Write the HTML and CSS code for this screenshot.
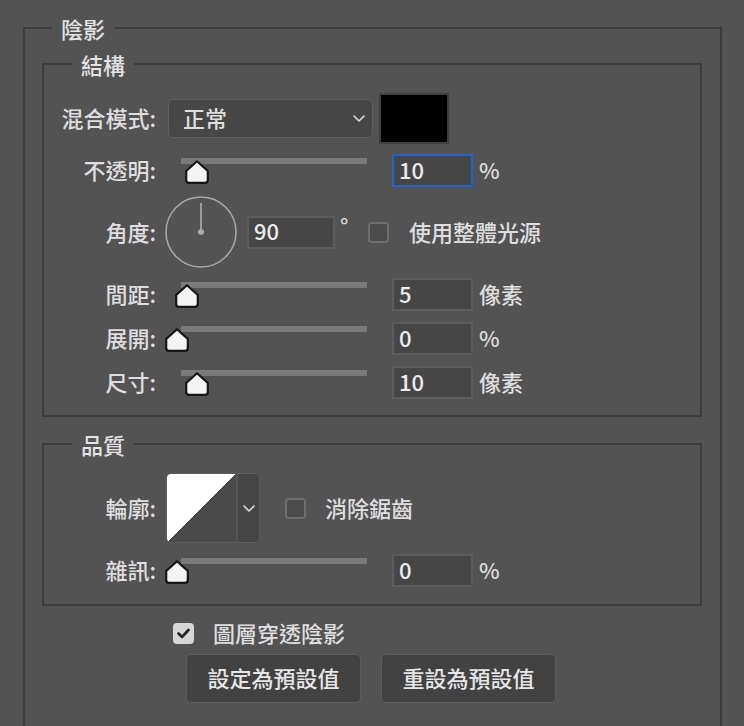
FILE: index.html
```html
<!DOCTYPE html>
<html lang="zh-Hant">
<head>
<meta charset="utf-8">
<title>陰影</title>
<link rel="stylesheet" href="styles.css">
</head>
<body>
<fieldset class="group outer">
  <legend class="legend legend-outer">陰影</legend>

  <fieldset class="group sub structure">
    <legend class="legend">結構</legend>

    <div class="row row-blend">
      <span class="label">混合模式:</span>
      <div class="select">
        <span>正常</span>
        <svg class="chev" width="12" height="7" viewBox="0 0 12 7"><polyline points="1,1 6,6 11,1" fill="none" stroke="#dcdcdc" stroke-width="1.6" stroke-linecap="round" stroke-linejoin="round"/></svg>
      </div>
      <div class="swatch"></div>
    </div>

    <div class="row row-slider">
      <span class="label">不透明:</span>
      <div class="slider">
        <div class="track"></div>
        <svg class="thumb" style="left:20px" width="24" height="24" viewBox="0 0 24 24"><path d="M12 1.2 L22.8 11 V20 Q22.8 22.8 20 22.8 H4 Q1.2 22.8 1.2 20 V11 Z" fill="#f4f4f4" stroke="#151515" stroke-width="2.2" stroke-linejoin="round"/></svg>
      </div>
      <input class="num focus" type="text" value="10">
      <span class="unit">%</span>
    </div>

    <div class="row row-angle">
      <span class="label">角度:</span>
      <svg class="dial" width="72" height="72" viewBox="0 0 72 72">
        <circle cx="36" cy="36" r="35" fill="none" stroke="#a9a9a9" stroke-width="1.5"/>
        <line x1="36" y1="36" x2="36" y2="7" stroke="#b5b5b5" stroke-width="1.5"/>
        <circle cx="36" cy="36" r="3" fill="#a9a9a9"/>
      </svg>
      <input class="num num-wide" type="text" value="90">
      <span class="deg">°</span>
      <span class="check check-angle"></span>
      <span class="check-text">使用整體光源</span>
    </div>

    <div class="row row-slider">
      <span class="label">間距:</span>
      <div class="slider">
        <div class="track"></div>
        <svg class="thumb" style="left:10px" width="24" height="24" viewBox="0 0 24 24"><path d="M12 1.2 L22.8 11 V20 Q22.8 22.8 20 22.8 H4 Q1.2 22.8 1.2 20 V11 Z" fill="#f4f4f4" stroke="#151515" stroke-width="2.2" stroke-linejoin="round"/></svg>
      </div>
      <input class="num" type="text" value="5">
      <span class="unit">像素</span>
    </div>

    <div class="row row-slider">
      <span class="label">展開:</span>
      <div class="slider">
        <div class="track"></div>
        <svg class="thumb" style="left:0px" width="24" height="24" viewBox="0 0 24 24"><path d="M12 1.2 L22.8 11 V20 Q22.8 22.8 20 22.8 H4 Q1.2 22.8 1.2 20 V11 Z" fill="#f4f4f4" stroke="#151515" stroke-width="2.2" stroke-linejoin="round"/></svg>
      </div>
      <input class="num" type="text" value="0">
      <span class="unit">%</span>
    </div>

    <div class="row row-slider">
      <span class="label">尺寸:</span>
      <div class="slider">
        <div class="track"></div>
        <svg class="thumb" style="left:20px" width="24" height="24" viewBox="0 0 24 24"><path d="M12 1.2 L22.8 11 V20 Q22.8 22.8 20 22.8 H4 Q1.2 22.8 1.2 20 V11 Z" fill="#f4f4f4" stroke="#151515" stroke-width="2.2" stroke-linejoin="round"/></svg>
      </div>
      <input class="num" type="text" value="10">
      <span class="unit">像素</span>
    </div>
  </fieldset>

  <fieldset class="group sub quality">
    <legend class="legend">品質</legend>

    <div class="row row-contour">
      <span class="label">輪廓:</span>
      <div class="contour">
        <div class="contour-preview"></div>
        <div class="contour-menu">
          <svg width="12" height="7" viewBox="0 0 12 7"><polyline points="1,1 6,6 11,1" fill="none" stroke="#dcdcdc" stroke-width="1.6" stroke-linecap="round" stroke-linejoin="round"/></svg>
        </div>
      </div>
      <span class="check check-contour"></span>
      <span class="check-text">消除鋸齒</span>
    </div>

    <div class="row row-slider">
      <span class="label">雜訊:</span>
      <div class="slider">
        <div class="track"></div>
        <svg class="thumb" style="left:0px" width="24" height="24" viewBox="0 0 24 24"><path d="M12 1.2 L22.8 11 V20 Q22.8 22.8 20 22.8 H4 Q1.2 22.8 1.2 20 V11 Z" fill="#f4f4f4" stroke="#151515" stroke-width="2.2" stroke-linejoin="round"/></svg>
      </div>
      <input class="num" type="text" value="0">
      <span class="unit">%</span>
    </div>
  </fieldset>

  <div class="knockout">
    <span class="check checked">
      <svg width="21" height="21" viewBox="0 0 21 21"><polyline points="5.5,10.5 9,14 15.5,7" fill="none" stroke="#262626" stroke-width="2.8" stroke-linecap="round" stroke-linejoin="round"/></svg>
    </span>
    <span class="check-text">圖層穿透陰影</span>
  </div>

  <div class="buttons">
    <button class="btn" type="button">設定為預設值</button>
    <button class="btn" type="button">重設為預設值</button>
  </div>
</fieldset>
</body>
</html>
```

FILE: styles.css
```css
html {
  background: #535353;
}

body {
  margin: 0;
  height: 726px;
  overflow: hidden;
  background: #535353;
  color: #dedede;
  font-family: "Noto Sans CJK TC", "Noto Sans", sans-serif;
  font-size: 22px;
  font-weight: 500;
}

.group {
  margin: 0;
  min-width: 0;
  border: 2px solid #3d3d3d;
}

.outer {
  margin: 14px 0 0 23px;
  width: 699px;
  box-sizing: border-box;
  padding: 8px 18px 60px 17px;
}

.legend {
  padding: 0 9px;
  margin-left: 28px;
  line-height: 28px;
  height: 28px;
  color: #e2e2e2;
}

.legend-outer {
  margin-left: 10px;
}

.sub {
  padding: 0;
  display: flex;
  flex-direction: column;
}

.structure {
  padding: 14px 0 15px 0;
  gap: 9px;
}

.quality {
  margin-top: 13px;
  padding: 15px 0 16px 0;
  gap: 10px;
}

.row {
  display: flex;
  align-items: center;
}

.label {
  width: 112px;
  margin-right: 9px;
  text-align: right;
  flex: none;
  white-space: nowrap;
  line-height: 26px;
  padding-bottom: 3px;
}

.row-blend {
  height: 52px;
}

.row-slider {
  height: 35px;
}

.row-angle {
  height: 72px;
  margin-top: -1px;
}

.row-contour {
  height: 70px;
}

/* dropdown */
.select {
  margin-left: 3px;
  width: 205px;
  height: 39px;
  box-sizing: border-box;
  border: 1px solid #606060;
  border-radius: 5px;
  background: #474747;
  display: flex;
  align-items: center;
  justify-content: space-between;
  padding: 0 7px 3px 14px;
}

.chev {
  margin-top: 3px;
}

.swatch {
  margin-left: 6px;
  width: 70px;
  height: 51px;
  box-sizing: border-box;
  border: 2px solid #414141;
  background: #000;
}

/* slider */
.slider {
  position: relative;
  width: 202px;
  height: 35px;
  flex: none;
}

.track {
  margin: 5px 0 0 16px;
  height: 6px;
  background: #7a7a7a;
}

.thumb {
  position: absolute;
  top: 7px;
}

/* numeric fields */
.num {
  margin: 0 0 0 25px;
  width: 81px;
  height: 33px;
  box-sizing: border-box;
  border: 2px solid #5c5c5c;
  background: #464646;
  color: #ececec;
  font-family: "Noto Sans CJK TC", "Noto Sans", sans-serif;
  font-size: 22px;
  font-weight: 500;
  padding: 0 0 4px 5px;
  outline: none;
}

.num.focus {
  border-color: #2164cf;
}

.num-wide {
  margin-left: 10px;
  width: 88px;
}

.unit {
  margin-left: 6px;
  line-height: 26px;
  padding-bottom: 3px;
}

.deg {
  margin-left: 5px;
  width: 12px;
  align-self: flex-start;
  margin-top: 18px;
  line-height: 22px;
}

/* checkboxes */
.check {
  flex: none;
  width: 21px;
  height: 21px;
  box-sizing: border-box;
  border: 2px solid #6e6e6e;
  border-radius: 4px;
  background: #4b4b4b;
}

.check-angle {
  margin-left: 16px;
}

.check-contour {
  margin-left: 25px;
}

.check.checked {
  border: none;
  background: #d6d6d6;
  display: flex;
}

.check-text {
  margin-left: 20px;
  white-space: nowrap;
  line-height: 26px;
  padding-bottom: 3px;
}

.check-contour + .check-text {
  margin-left: 19px;
}

/* contour picker */
.contour {
  margin-left: 1px;
  width: 94px;
  height: 70px;
  box-sizing: border-box;
  border: 1px solid #5e5e5e;
  border-radius: 5px;
  overflow: hidden;
  display: flex;
}

.contour-preview {
  width: 69px;
  height: 100%;
  background: linear-gradient(to bottom right, #ffffff 50%, #4a4a4a 50%);
  border-right: 2px solid #555;
}

.contour-menu {
  flex: 1;
  background: #464646;
  display: flex;
  align-items: center;
  justify-content: center;
}

/* bottom */
.knockout {
  margin: 15px 0 0 131px;
  height: 24px;
  display: flex;
  align-items: center;
}

.knockout .check-text {
  margin-left: 19px;
}

.buttons {
  margin: 9px 0 0 144px;
  display: flex;
  gap: 20px;
}

.btn {
  width: 175px;
  height: 49px;
  box-sizing: border-box;
  border: 1px solid #5d5d5d;
  border-radius: 5px;
  background: #424242;
  color: #e6e6e6;
  font-family: "Noto Sans CJK TC", "Noto Sans", sans-serif;
  font-size: 22px;
  font-weight: 500;
  padding: 0 0 4px 0;
}
```
